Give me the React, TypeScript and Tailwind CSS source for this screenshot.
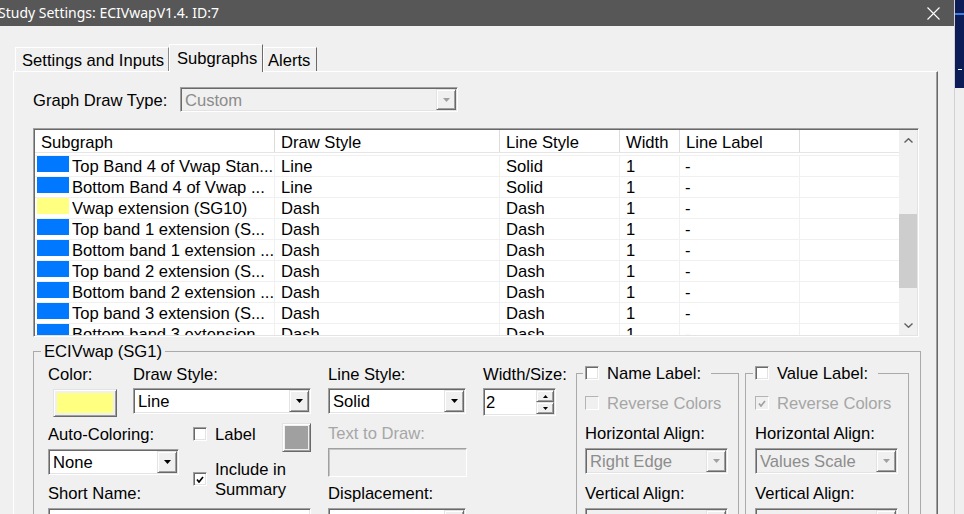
import React from 'react'

// classic win32 3d edges
const SUNKEN =
  'border border-t-[#a0a0a0] border-l-[#a0a0a0] border-b-white border-r-white shadow-[inset_1px_1px_0_#696969,inset_-1px_-1px_0_#e3e3e3]'
const RAISED =
  'border border-t-[#e3e3e3] border-l-[#e3e3e3] border-b-[#696969] border-r-[#696969] shadow-[inset_1px_1px_0_#ffffff,inset_-1px_-1px_0_#a0a0a0]'
// Liberation Sans sits a pixel higher than the dialog font
const TXT = 'relative top-[1px]'

type Row = { color: string; name: string; draw: string; line: string }

const BLUE = 'bg-[#0078ff]'
const YELLOW = 'bg-[#ffff80]'

const ROWS: Row[] = [
  { color: BLUE, name: 'Top Band 4 of Vwap Stan...', draw: 'Line', line: 'Solid' },
  { color: BLUE, name: 'Bottom Band 4 of Vwap ...', draw: 'Line', line: 'Solid' },
  { color: YELLOW, name: 'Vwap extension (SG10)', draw: 'Dash', line: 'Dash' },
  { color: BLUE, name: 'Top band 1 extension (S...', draw: 'Dash', line: 'Dash' },
  { color: BLUE, name: 'Bottom band 1 extension ...', draw: 'Dash', line: 'Dash' },
  { color: BLUE, name: 'Top band 2 extension (S...', draw: 'Dash', line: 'Dash' },
  { color: BLUE, name: 'Bottom band 2 extension ...', draw: 'Dash', line: 'Dash' },
  { color: BLUE, name: 'Top band 3 extension (S...', draw: 'Dash', line: 'Dash' },
  { color: BLUE, name: 'Bottom band 3 extension ...', draw: 'Dash', line: 'Dash' },
]

const HEADERS = ['Subgraph', 'Draw Style', 'Line Style', 'Width', 'Line Label']
const COLW = ['w-[240px]', 'w-[225px]', 'w-[120px]', 'w-[60px]', 'w-[120px]']

function Arrow({ disabled }: { disabled?: boolean }) {
  return (
    <svg width="7" height="4" viewBox="0 0 7 4">
      <path d="M0 0h7L3.5 4z" fill={disabled ? '#a0a0a0' : '#000'} />
    </svg>
  )
}

function Combo({ value, className, disabled }: { value?: string; className: string; disabled?: boolean }) {
  return (
    <div
      className={`${SUNKEN} ${className} flex shrink-0 ${disabled ? 'bg-[#f0f0f0] text-[#8c8c8c]' : 'bg-white text-black'}`}
    >
      <span className={`${TXT} flex-1 pl-[4px] leading-[24px] whitespace-nowrap overflow-hidden`}>{value}</span>
      <span className={`${RAISED} w-[20px] my-[1px] mr-[1px] bg-[#f0f0f0] flex items-center justify-center`}>
        <Arrow disabled={disabled} />
      </span>
    </div>
  )
}

function Check({ checked, disabled }: { checked?: boolean; disabled?: boolean }) {
  const box = disabled
    ? 'border border-t-[#b4b4b4] border-l-[#b4b4b4] border-b-white border-r-white bg-[#f0f0f0]'
    : `${SUNKEN} bg-white`
  return (
    <span className={`w-[14px] h-[14px] shrink-0 flex items-center justify-center ${box}`}>
      {checked && (
        <svg width="8" height="7" viewBox="0 0 8 7">
          <path d="M1 3.5l2 2.5 4-5" fill="none" stroke={disabled ? '#a0a0a0' : '#000'} strokeWidth="1.7" />
        </svg>
      )}
    </span>
  )
}

function Spin() {
  return (
    <div className={`${SUNKEN} mt-[4px] w-[73px] h-[28px] bg-white flex`}>
      <span className={`${TXT} flex-1 pl-[2px] leading-[25px]`}>2</span>
      <div className="w-[19px] flex flex-col py-[1px] pr-[1px]">
        <span className={`${RAISED} flex-1 bg-[#f0f0f0] flex items-center justify-center`}>
          <svg width="5" height="3" viewBox="0 0 5 3">
            <path d="M0 3h5L2.5 0z" fill="#000" />
          </svg>
        </span>
        <span className={`${RAISED} flex-1 bg-[#f0f0f0] flex items-center justify-center`}>
          <svg width="5" height="3" viewBox="0 0 5 3">
            <path d="M0 0h5L2.5 3z" fill="#000" />
          </svg>
        </span>
      </div>
    </div>
  )
}

function Chevron({ up }: { up?: boolean }) {
  return (
    <svg width="9" height="5" viewBox="0 0 9 5">
      <polyline
        points={up ? '0.5,4.5 4.5,0.7 8.5,4.5' : '0.5,0.5 4.5,4.3 8.5,0.5'}
        fill="none"
        stroke="#606060"
        strokeWidth="1.4"
      />
    </svg>
  )
}

function SubgraphTable() {
  return (
    <div className={`${SUNKEN} mt-[16px] w-[886px] h-[209px] p-[1px] flex bg-white`}>
      <div className="w-[864px] h-full overflow-hidden">
        <div className="flex h-[23px] border-b border-[#e5e5e5]">
          {HEADERS.map((h, i) => (
            <div key={h} className={`${COLW[i]} shrink-0 border-r border-[#dcdcdc] pl-[6px] leading-[23px]`}>
              <span className={TXT}>{h}</span>
            </div>
          ))}
          <div className="flex-1" />
        </div>
        <div className="mt-[2px] border-t border-[#f0f0f0]">
          {ROWS.map((r, i) => (
            <div key={i} className="flex h-[21px] border-b border-[#f0f0f0] leading-[21px]">
              <div className="w-[240px] shrink-0 border-r border-[#f0f0f0] flex items-start pl-[2px] overflow-hidden">
                <span className={`w-[32px] h-[16px] shrink-0 ${r.color}`} />
                <span className="ml-[3px] whitespace-nowrap">{r.name}</span>
              </div>
              <div className="w-[225px] shrink-0 border-r border-[#f0f0f0] pl-[6px]">{r.draw}</div>
              <div className="w-[120px] shrink-0 border-r border-[#f0f0f0] pl-[6px]">{r.line}</div>
              <div className="w-[60px] shrink-0 border-r border-[#f0f0f0] pl-[6px]">1</div>
              <div className="w-[120px] shrink-0 border-r border-[#f0f0f0] pl-[5px]">-</div>
              <div className="flex-1" />
            </div>
          ))}
        </div>
      </div>
      {/* scrollbar */}
      <div className="w-[18px] h-full bg-[#f0f0f0] flex flex-col">
        <div className="h-[21px] flex items-center justify-center">
          <Chevron up />
        </div>
        <div className="h-[63px]" />
        <div className="h-[74px] bg-[#cdcdcd]" />
        <div className="flex-1" />
        <div className="h-[19px] flex items-center justify-center">
          <Chevron />
        </div>
      </div>
    </div>
  )
}

function LabelGroup({
  title,
  reverseChecked,
  hAlign,
  leftPad,
}: {
  title: string
  reverseChecked?: boolean
  hAlign: string
  leftPad: 'a' | 'b'
}) {
  return (
    <fieldset
      className={`-mt-[1px] border border-[#aaaaaa] ${leftPad === 'a' ? 'ml-[20px] w-[163px]' : 'ml-[6px] w-[164px]'}`}
    >
      <legend className={`${leftPad === 'a' ? 'ml-[6px]' : 'ml-[7px]'} pl-[2px] pr-[10px]`}>
        <span className="flex items-center gap-[8px] h-[20px] leading-[20px]">
          <Check />
          <span className={TXT}>{title}</span>
        </span>
      </legend>
      <div className={`flex flex-col leading-[20px] ${leftPad === 'a' ? 'pl-[8px]' : 'pl-[9px]'}`}>
        <div className="mt-[10px] flex items-center gap-[8px] text-[#a6a6a6]">
          <Check disabled checked={reverseChecked} />
          <span className={TXT}>Reverse Colors</span>
        </div>
        <span className={`${TXT} mt-[10px]`}>Horizontal Align:</span>
        <Combo value={hAlign} disabled className="mt-[5px] w-[143px] h-[26px]" />
        <span className={`${TXT} mt-[9px]`}>Vertical Align:</span>
        <Combo disabled className="mt-[5px] w-[143px] h-[26px]" />
      </div>
    </fieldset>
  )
}

function SubgraphGroup() {
  return (
    <fieldset className="mt-[4px] w-[888px] border border-[#aaaaaa]">
      <legend className="ml-[7px] px-[3px] leading-[20px]">
        <span className={TXT}>ECIVwap (SG1)</span>
      </legend>
      <div className="flex items-start pt-[3px] pl-[14px]">
        {/* color / draw style / auto-coloring / short name */}
        <div className="w-[263px] shrink-0 flex flex-col">
          <div className="flex leading-[20px]">
            <span className={`${TXT} w-[85px]`}>Color:</span>
            <span className={TXT}>Draw Style:</span>
          </div>
          <div className="flex items-start mt-[4px]">
            <div className={`${RAISED} ml-[5px] mt-[1px] w-[64px] h-[28px] p-[3px] bg-[#f0f0f0]`}>
              <div className="w-full h-full bg-[#ffff80]" />
            </div>
            <Combo value="Line" className="ml-[16px] w-[178px] h-[26px]" />
          </div>
          <div className="flex items-start">
            <div className="w-[145px] shrink-0 flex flex-col leading-[20px]">
              <span className={`${TXT} mt-[7px]`}>Auto-Coloring:</span>
              <Combo value="None" className="mt-[5px] w-[131px] h-[26px]" />
              <span className={`${TXT} mt-[8px]`}>Short Name:</span>
            </div>
            <div className="flex-1 flex flex-col">
              <div className="flex items-start mt-[6px]">
                <span className="mt-[4px]">
                  <Check />
                </span>
                <span className={`${TXT} ml-[8px] mt-[1px] leading-[20px]`}>Label</span>
                <div className={`${RAISED} ml-auto w-[29px] h-[29px] p-[2px] bg-[#f0f0f0]`}>
                  <div className="w-full h-full bg-[#a0a0a0]" />
                </div>
              </div>
              <div className="flex items-center mt-[7px]">
                <Check checked />
                <span className={`${TXT} ml-[8px] leading-[20px]`}>
                  Include in
                  <br />
                  Summary
                </span>
              </div>
            </div>
          </div>
          <div className={`${SUNKEN} mt-[5px] w-[263px] h-[26px] bg-white`} />
        </div>

        {/* line style / text to draw / displacement */}
        <div className="ml-[17px] w-[139px] shrink-0 flex flex-col leading-[20px]">
          <span className={TXT}>Line Style:</span>
          <Combo value="Solid" className="mt-[4px] w-[138px] h-[26px]" />
          <span className={`${TXT} mt-[9px] text-[#a6a6a6]`}>Text to Draw:</span>
          <div className="mt-[5px] w-[139px] h-[29px] border border-t-[#a0a0a0] border-l-[#a0a0a0] border-b-white border-r-white shadow-[inset_1px_1px_0_#c4c4c4] bg-[#f0f0f0]" />
          <span className={`${TXT} mt-[6px]`}>Displacement:</span>
          <Combo className="mt-[5px] w-[138px] h-[26px]" />
        </div>

        {/* width */}
        <div className="ml-[16px] w-[73px] shrink-0 flex flex-col leading-[20px]">
          <span className={`${TXT} whitespace-nowrap`}>Width/Size:</span>
          <Spin />
        </div>

        <LabelGroup title="Name Label:" hAlign="Right Edge" leftPad="a" />
        <LabelGroup title="Value Label:" hAlign="Values Scale" reverseChecked leftPad="b" />
      </div>
    </fieldset>
  )
}

export default function App() {
  return (
    <div className="w-[964px] h-[514px] overflow-hidden flex bg-[#f0f0f0] font-['Liberation_Sans',Arial,sans-serif] text-[16.6px] text-black">
      <div className="w-[955px] h-full shrink-0 flex flex-col border-r border-[#d2d2d2]">
        {/* title bar */}
        <div className="h-[26px] shrink-0 bg-[#575757] flex items-center text-white">
          <span className="-ml-[2px] font-['Noto_Sans',sans-serif] text-[14px] leading-[26px] whitespace-nowrap">
            Study Settings: ECIVwapV1.4. ID:7
          </span>
          <svg className="ml-auto mr-[14px]" width="13" height="13" viewBox="0 0 13 13">
            <path d="M0.5 0.5l12 12M12.5 0.5l-12 12" stroke="#ffffff" strokeWidth="1.1" />
          </svg>
        </div>

        <div className="flex-1 flex flex-col pt-[18px] min-h-0">
          {/* tabs */}
          <div className="flex items-end ml-[15px] h-[28px] shrink-0">
            <div className="w-[154px] h-[25px] pl-[6px] flex items-center border-t border-l border-r border-t-white border-l-white border-r-[#8a8a8a]">
              <span className={TXT}>Settings and Inputs</span>
            </div>
            <div className="relative z-10 w-[94px] h-[28px] pl-[7px] pb-[1px] flex items-center bg-[#f0f0f0] border-t border-l border-r border-t-white border-l-white border-r-[#696969]">
              <span className={TXT}>Subgraphs</span>
            </div>
            <div className="w-[54px] h-[25px] pl-[4px] flex items-center border-t border-l border-r border-t-white border-l-white border-r-[#696969]">
              <span className={TXT}>Alerts</span>
            </div>
          </div>

          {/* tab page */}
          <div className="-mt-[1px] ml-[13px] w-[925px] flex-1 border-t border-l border-r border-t-white border-l-white border-r-[#696969] shadow-[inset_-1px_0_0_#a0a0a0] pl-[19px]">
            <div className="flex items-center mt-[15px] h-[25px]">
              <span className={`${TXT} w-[147px] leading-[20px]`}>Graph Draw Type:</span>
              <Combo value="Custom" disabled className="w-[278px] h-[25px]" />
            </div>
            <SubgraphTable />
            <SubgraphGroup />
          </div>
        </div>
      </div>

      {/* neighbouring window edge */}
      <div className="w-[9px] h-full flex flex-col">
        <div className="h-[88px] bg-[#0b1c56] flex flex-col">
          <div className="h-[13px]" />
          <div className="h-[2px] bg-[#3d7ee0]" />
          <div className="h-[54px]" />
          <div className="h-[1px] w-[4px] ml-[3px] bg-white" />
        </div>
        <div className="flex-1 bg-[#efefef]" />
      </div>
    </div>
  )
}
